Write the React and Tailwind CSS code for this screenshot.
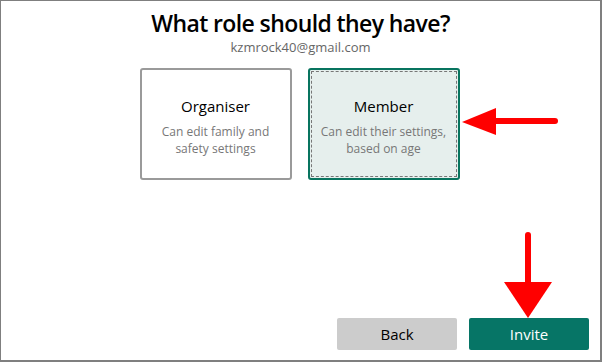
import React from 'react';

const roles = [
  { name: 'Organiser', lines: ['Can edit family and', 'safety settings'], selected: false },
  { name: 'Member', lines: ['Can edit their settings,', 'based on age'], selected: true },
];

const App = () => {
  return (
    <div className="relative w-[602px] h-[362px] bg-white border-t border-l border-r-2 border-b-2 border-[#7f7f7f] flex flex-col font-['Open_Sans',sans-serif] overflow-hidden">
      {/* Header */}
      <div className="flex flex-col items-center pt-[7px]">
        <h1 className="text-[23px] leading-[30px] font-semibold text-black tracking-[-0.6px]">
          What role should they have?
        </h1>
        <p className="text-[13px] leading-[18px] text-[#666]">kzmrock40@gmail.com</p>
      </div>

      {/* Role cards */}
      <div className="flex justify-center gap-4 mt-[12px] pr-[2px]">
        {roles.map((role) => (
          <div
            key={role.name}
            className={`w-[152px] h-[112px] rounded-[3px] border-2 p-[1px] ${
              role.selected ? 'border-[#08745f] bg-[#e6efed]' : 'border-[#9a9a9a] bg-white'
            }`}
          >
            <div
              className={`h-full flex flex-col items-center justify-center pt-[4px] ${
                role.selected ? 'border border-dashed border-[#777]' : 'border border-transparent'
              }`}
            >
              <div className="text-[15px] leading-[20px] text-black mb-[7px]">{role.name}</div>
              {role.lines.map((line) => (
                <div key={line} className="text-[12px] leading-[17px] text-[#777]">
                  {line}
                </div>
              ))}
            </div>
          </div>
        ))}
      </div>

      {/* Footer buttons */}
      <div className="mt-auto flex justify-end gap-3 pr-[11px] pb-[10px]">
        <button className="w-[120px] h-[32px] rounded-[2px] bg-[#cccccc] text-[15px] text-black">Back</button>
        <button className="w-[120px] h-[32px] rounded-[2px] bg-[#067566] text-[15px] text-white">Invite</button>
      </div>

      {/* Annotation arrows */}
      <svg className="absolute left-[458px] top-[100px]" width="104" height="40" viewBox="0 0 104 40">
        <polygon points="3,21 37,7 37,34" fill="#ff0000" />
        <line x1="36" y1="20" x2="96" y2="20" stroke="#ff0000" strokeWidth="6" strokeLinecap="round" />
      </svg>
      <svg className="absolute left-[500px] top-[226px]" width="56" height="94" viewBox="0 0 56 94">
        <line x1="27" y1="8" x2="27" y2="62" stroke="#ff0000" strokeWidth="6" strokeLinecap="round" />
        <polygon points="3,55 51,55 27,91" fill="#ff0000" />
      </svg>
    </div>
  );
};

export default App;
